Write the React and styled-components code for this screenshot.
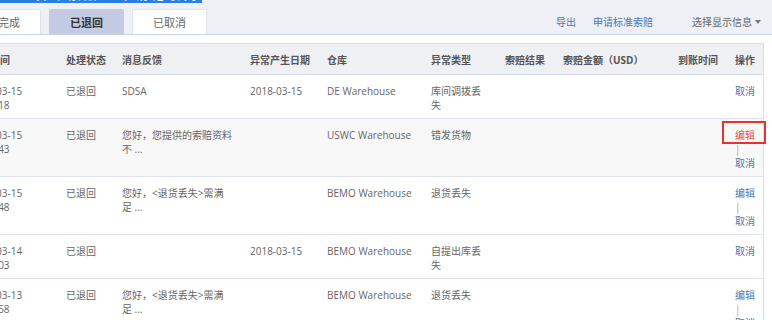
import React from 'react';
import styled, { createGlobalStyle } from 'styled-components';

const Global = createGlobalStyle`
  html, body { margin: 0; padding: 0; background: #fff; overflow: hidden; }
  body {
    font-family: "Open Sans", "Noto Sans CJK SC", sans-serif;
    font-size: 10px;
    color: #666;
  }
`;

const Page = styled.div`
  margin-left: -38px;
  width: 810px;
  height: 320px;
  overflow: hidden;
`;

const TabBar = styled.div`
  position: relative;
  display: flex;
  height: 34px;
  background: #eef0f5;
  border-bottom: 1px solid #cbd4e6;
  padding: 0 11px 0 4px;
`;

const TitleStrip = styled.div`
  position: absolute;
  left: 38px;
  top: 0;
  width: 202px;
  height: 3px;
  background: #2a7fe6;
  overflow: hidden;
  color: #fff;
  font-size: 13px;
  line-height: 13px;
  white-space: nowrap;
`;

const TitleText = styled.div`
  margin-top: -12px;
  padding-left: 36px;
  letter-spacing: 3px;
`;

const Tabs = styled.div`
  display: flex;
  align-self: flex-end;
  gap: 8px;
`;

const Tab = styled.div`
  width: 75px;
  height: 25px;
  box-sizing: border-box;
  display: flex;
  align-items: center;
  justify-content: center;
  font-size: 11px;
  border: 1px solid ${p => (p.$active ? '#c4cae1' : '#dfe3ea')};
  border-bottom: none;
  border-radius: 2px 2px 0 0;
  background: ${p => (p.$active ? '#c4cae1' : '#fff')};
  color: ${p => (p.$active ? '#333' : '#666')};
  font-weight: ${p => (p.$active ? 700 : 400)};
`;

const Toolbar = styled.div`
  margin-left: auto;
  align-self: flex-end;
  height: 25px;
  display: flex;
  align-items: center;
`;

const ToolLink = styled.span`
  color: ${p => (p.$plain ? '#666' : '#4a78b2')};
  margin-left: ${p => p.$gap || 0}px;
  display: flex;
  align-items: center;
`;

const Caret = styled.span`
  display: inline-block;
  width: 0;
  height: 0;
  margin-left: 3px;
  border-left: 3.5px solid transparent;
  border-right: 3.5px solid transparent;
  border-top: 4px solid #777;
`;

const Table = styled.table`
  width: 801px;
  table-layout: fixed;
  border-collapse: collapse;
  margin-top: 8px;
  border-right: 1px solid #d8deea;
`;

const HeadCell = styled.th`
  height: 30px;
  padding: 0 ${p => (p.$last ? 6 : 8)}px 0 ${p => (p.$last ? 13 : 8)}px;
  background: #eef0f4;
  border-top: 1px solid #dfe3ea;
  border-bottom: 1px solid #d3dae8;
  text-align: left;
  font-weight: 700;
  color: #555;
  white-space: nowrap;
  overflow: hidden;
`;

const Row = styled.tr`
  background: ${p => (p.$shaded ? '#f8f8f9' : '#fff')};
`;

const Cell = styled.td`
  padding: 9px ${p => (p.$last ? 6 : p.$pr || 8)}px 6px ${p => (p.$last ? 13 : 8)}px;
  line-height: 14px;
  vertical-align: top;
  border-bottom: 1px solid #dde2ec;
  color: #666;
`;

const Action = styled.span`
  position: relative;
  display: block;
  color: ${p => (p.$highlight ? '#e2533f' : '#4a78b2')};
  &::after {
    content: '';
    display: ${p => (p.$highlight ? 'block' : 'none')};
    position: absolute;
    left: -13px;
    right: -9px;
    top: -7px;
    bottom: -2px;
    border: 2px solid #e8302e;
  }
`;

const Sep = styled.span`
  display: block;
  color: #d08888;
`;

const columns = [
  { title: '申请时间', width: 96 },
  { title: '处理状态', width: 56 },
  { title: '消息反馈', width: 128 },
  { title: '异常产生日期', width: 77 },
  { title: '仓库', width: 104 },
  { title: '异常类型', width: 74 },
  { title: '索赔结果', width: 58 },
  { title: '索赔金额（USD）', width: 115 },
  { title: '到账时间', width: 52 },
  { title: '操作', width: 41 },
];

const rows = [
  { time: '2018-03-15 14:51:18', msg: 'SDSA', date: '2018-03-15', wh: 'DE Warehouse', type: '库间调拨丢失', actions: ['取消'] },
  { time: '2018-03-15 14:20:43', msg: '您好，您提供的索赔资料不 ...', date: '', wh: 'USWC Warehouse', type: '错发货物', actions: ['编辑', '取消'], highlight: true, shaded: true },
  { time: '2018-03-15 11:02:48', msg: '您好，<退货丢失>需满足 ...', date: '', wh: 'BEMO Warehouse', type: '退货丢失', actions: ['编辑', '取消'] },
  { time: '2018-03-14 18:30:03', msg: '', date: '2018-03-15', wh: 'BEMO Warehouse', type: '自提出库丢失', actions: ['取消'] },
  { time: '2018-03-13 16:45:58', msg: '您好，<退货丢失>需满足 ...', date: '', wh: 'BEMO Warehouse', type: '退货丢失', actions: ['编辑', '取消'] },
];

function Actions({ items, highlight }) {
  return (
    <>
      {items.map((a, i) => (
        <React.Fragment key={a}>
          {i > 0 && <Sep>|</Sep>}
          <Action $highlight={highlight && a === '编辑'}>{a}</Action>
        </React.Fragment>
      ))}
    </>
  );
}

export default function App() {
  return (
    <>
      <Global />
      <Page>
        <TabBar>
          <TitleStrip>
            <TitleText>异常索赔 · 申请记录列表</TitleText>
          </TitleStrip>
          <Tabs>
            <Tab>已完成</Tab>
            <Tab $active>已退回</Tab>
            <Tab>已取消</Tab>
          </Tabs>
          <Toolbar>
            <ToolLink>导出</ToolLink>
            <ToolLink $gap={17}>申请标准索赔</ToolLink>
            <ToolLink $gap={39} $plain>
              选择显示信息
              <Caret />
            </ToolLink>
          </Toolbar>
        </TabBar>
        <Table>
          <colgroup>
            {columns.map(c => (
              <col key={c.title} style={{ width: c.width }} />
            ))}
          </colgroup>
          <thead>
            <tr>
              {columns.map((c, i) => (
                <HeadCell key={c.title} $last={i === columns.length - 1}>
                  {c.title}
                </HeadCell>
              ))}
            </tr>
          </thead>
          <tbody>
            {rows.map((r, i) => (
              <Row key={i} $shaded={r.shaded}>
                <Cell>{r.time}</Cell>
                <Cell>已退回</Cell>
                <Cell $pr={10}>{r.msg}</Cell>
                <Cell>{r.date}</Cell>
                <Cell>{r.wh}</Cell>
                <Cell>{r.type}</Cell>
                <Cell />
                <Cell />
                <Cell />
                <Cell $last>
                  <Actions items={r.actions} highlight={r.highlight} />
                </Cell>
              </Row>
            ))}
          </tbody>
        </Table>
      </Page>
    </>
  );
}
